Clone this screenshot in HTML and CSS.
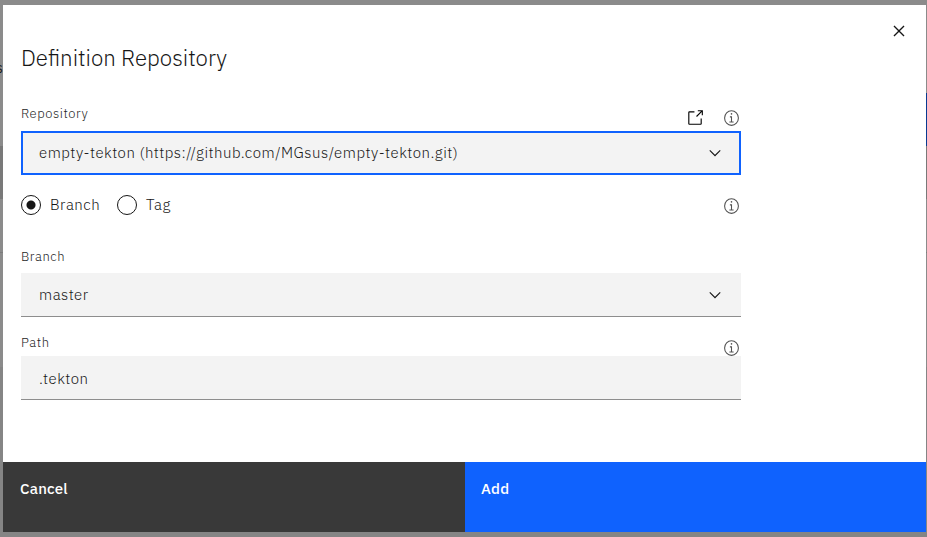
FILE: index.html
```html
<!DOCTYPE html>
<html lang="en">
<head>
<meta charset="utf-8">
<title>Definition Repository</title>
<link rel="stylesheet" href="styles.css">
</head>
<body>
<svg class="sprite" aria-hidden="true">
  <symbol id="info" viewBox="0 0 32 32" preserveAspectRatio="none"><path d="M17 22V13h-4v2h2v7h-3v2h8v-2zM16 7a1.5 1.5 0 1 0 1.500 1.500A1.500 1.500 0 0 0 16 7z"/><path d="M16 30A14 14 0 1 1 30 16 14 14 0 0 1 16 30zM16 4A12 12 0 1 0 28 16 12 12 0 0 0 16 4z"/></symbol>
  <symbol id="chevron" viewBox="0 0 16 16"><path d="M8 11 3 6l.7-.7L8 9.600l4.300-4.300.7.7z"/></symbol>
</svg>
<span class="behind-text">s</span>
<span class="behind-button"></span>
<main class="modal">
  <div class="content">
    <header class="header">
      <h1 class="title">Definition Repository</h1>
      <button class="close" aria-label="Close"><svg width="22" height="22" viewBox="0 0 32 32"><path d="M24 9.400 22.600 8 16 14.600 9.400 8 8 9.400 14.600 16 8 22.600 9.400 24 16 17.400 22.600 24 24 22.600 17.400 16z"/></svg></button>
    </header>
    <form class="form">
      <div class="label-row repo-label"><label class="label">Repository</label>
        <span class="icons"><svg class="launch" width="18" height="18" viewBox="0 0 32 32"><path d="M26 28H6a2 2 0 0 1-2-2V6a2 2 0 0 1 2-2h9v2H6v20h20v-9h2v9a2 2 0 0 1-2 2z"/><path d="M21 2v2h5.600L18 12.600 19.400 14 28 5.400V11h2V2z"/></svg><svg class="info" width="17" height="18"><use href="#info"/></svg></span>
      </div>
      <div class="field focused"><span class="repo-text">empty-tekton (https://github.com/MGsus/empty-tekton.git)</span><svg class="chevron" width="18" height="18"><use href="#chevron"/></svg></div>
      <div class="radio-row">
        <span class="radio checked"></span><span class="radio-text">Branch</span>
        <span class="radio"></span><span class="radio-text tag">Tag</span>
        <svg class="info" width="17" height="18"><use href="#info"/></svg>
      </div>
      <div class="label-row branch-label"><label class="label">Branch</label></div>
      <div class="field"><span class="value">master</span><svg class="chevron" width="18" height="18"><use href="#chevron"/></svg></div>
      <div class="label-row path-label"><label class="label">Path</label><span class="icons"><svg class="info" width="17" height="18"><use href="#info"/></svg></span></div>
      <div class="field path"><span class="value tekton">.tekton</span></div>
    </form>
  </div>
  <footer class="footer"><button class="button cancel"><span>Cancel</span></button><button class="button add"><span>Add</span></button></footer>
</main>
</body>
</html>
```
FILE: styles.css
```css
* { box-sizing: border-box; }
body {
  margin: 0;
  height: 537px;
  padding: 5px 1px 5px 3px;
  overflow: hidden;
  position: relative;
  background: linear-gradient(#8b8b8b 0 146px, #797979 146px 199px, #8b8b8b 199px 252px, #7c7c7c 252px 253px, #8b8b8b 253px 367px, #858585 367px);
  font-family: "IBM Plex Sans", Roboto, "Liberation Sans", sans-serif;
  color: #161616;
}
.sprite { display: none; }
svg { display: block; fill: currentColor; }
.behind-text { position: absolute; left: -4px; top: 59px; font-size: 14px; line-height: 18px; }
.behind-button { position: absolute; right: 0; top: 93px; width: 1px; height: 53px; background: #083a91; }
.modal { position: relative; height: 527px; background: #fff; display: flex; flex-direction: column; }
.content { flex: 1; padding: 0 18px; }
.header { display: flex; justify-content: space-between; height: 97px; }
.title { margin: 38px 0 0; font-size: 22.3px; line-height: 30px; font-weight: 300; white-space: nowrap; }
button { border: 0; padding: 0; background: none; font: inherit; color: inherit; }
.close { width: 22px; height: 22px; margin: 15px -2px 0 0; }
.form { width: 720px; }
.label-row { display: flex; justify-content: space-between; }
.repo-label { height: 29px; }
.label { font-size: 13px; line-height: 18px; letter-spacing: .55px; font-weight: 300; color: #262626; padding-top: 3px; }
.icons { display: flex; gap: 19px; padding-top: 7px; }
.launch { color: #000; }
.info { color: #525252; margin-right: 1px; }
.field { height: 44px; background: #f3f3f3; border-bottom: 1px solid #8d8d8d; padding: 0 17px 0 18px; display: flex; align-items: center; justify-content: space-between; font-size: 15px; font-weight: 300; line-height: 20px; }
.focused { border: 2px solid #0f62fe; padding: 0 15px 0 16px; }
.repo-text { letter-spacing: .5px; white-space: nowrap; }
.value { letter-spacing: .5px; }
.radio-row { height: 60px; display: flex; align-items: center; font-size: 15px; line-height: 20px; font-weight: 300; }
.radio-row .info { margin-left: auto; position: relative; top: 1px; }
.radio { width: 20px; height: 20px; border: 1px solid #161616; border-radius: 50%; }
.checked { background: radial-gradient(circle, #161616 0 4px, transparent 5px); }
.radio-text { width: 67px; margin: 0 0 1px 9px; letter-spacing: .5px; }
.branch-label { height: 38px; padding-top: 10px; }
.path-label { height: 39px; padding-top: 14px; }
.path-label .icons { padding-top: 8px; }
.path { padding-top: 2px; }
.footer { height: 70px; display: grid; grid-template-columns: 462px 1fr; color: #fff; font-size: 15px; font-weight: 500; }
.button { text-align: left; padding: 17px; display: flex; align-items: flex-start; line-height: 20px; }
.cancel { background: #393939; }
.add { background: #0f62fe; padding-left: 16px; }
.button span { letter-spacing: .2px; }
```
